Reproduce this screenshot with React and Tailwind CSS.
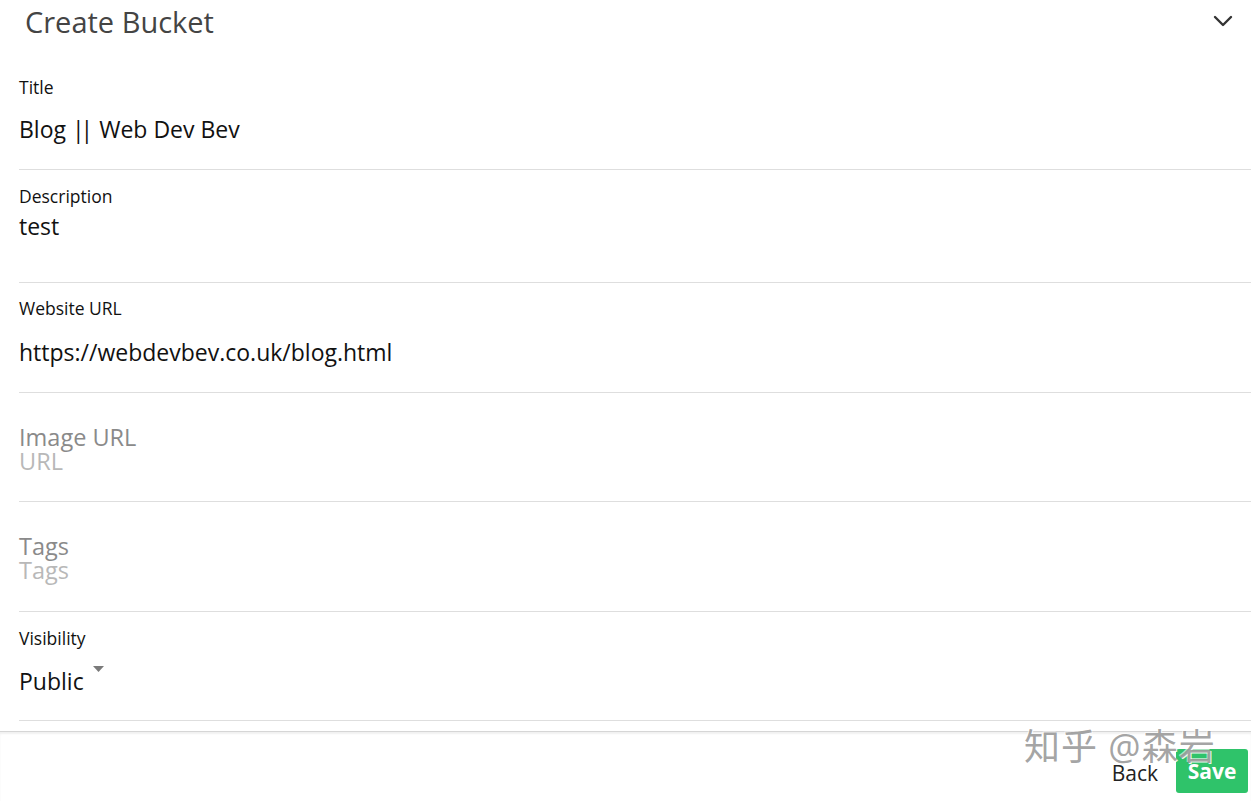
import React from "react";

const font = "font-['Open_Sans','Noto_Sans_CJK_SC',sans-serif]";

const Field = ({ label, value, className, gapClass }) => (
  <div className={`border-b border-[#dedede] ${className}`}>
    <div className="text-[17.5px] leading-[20px] text-[#111]">{label}</div>
    <div className={`text-[23px] leading-[30px] text-[#111] ${gapClass}`}>{value}</div>
  </div>
);

const Placeholder = ({ label, hint, className }) => (
  <div className={`border-b border-[#dedede] ${className}`}>
    <div className="text-[23.5px] leading-[24px] text-[#8a8a8a]">{label}</div>
    <div className="text-[23.5px] leading-[24px] text-[#b8b8b8]">{hint}</div>
  </div>
);

export default function App() {
  return (
    <div className={`relative w-[1251px] h-[801px] overflow-hidden bg-white ${font}`}>
      <div className="flex h-[60px] items-start justify-between pl-[25px] pr-[18px]">
        <h1 className="pt-[4px] text-[29px] leading-[36px] text-[#444]">Create Bucket</h1>
        <svg className="mt-[15px]" width="20" height="12" viewBox="0 0 20 12">
          <path d="M2 2 L10 10 L18 2" fill="none" stroke="#333" strokeWidth="2.4" strokeLinecap="round" strokeLinejoin="round" />
        </svg>
      </div>

      <div className="pl-[19px]">
        <Field
          label="Title"
          value={
            <>
              Blog <span className="tracking-[-4px]">|</span>| Web Dev Bev
            </>
          }
          className="h-[110px] pt-[17px]"
          gapClass="mt-[17px]"
        />
        <Field label="Description" value="test" className="h-[113px] pt-[16px]" gapClass="mt-[5px]" />
        <Field label="Website URL" value="https://webdevbev.co.uk/blog.html" className="h-[110px] pt-[15px]" gapClass="mt-[19px]" />
        <Placeholder label="Image URL" hint="URL" className="h-[109px] pt-[32px]" />
        <Placeholder label="Tags" hint="Tags" className="h-[110px] pt-[32px]" />
        <div className="h-[109px] border-b border-[#dedede] pt-[16px]">
          <div className="text-[17.5px] leading-[20px] text-[#111]">Visibility</div>
          <div className="mt-[18px] flex items-start gap-[9px]">
            <span className="text-[23px] leading-[30px] text-[#111]">Public</span>
            <svg width="11" height="6" viewBox="0 0 11 6">
              <path d="M0 0 L11 0 L5.5 6 Z" fill="#7a7a7a" />
            </svg>
          </div>
        </div>
      </div>

      <div className="mt-[10px] flex h-[70px] items-start justify-end border-t border-[#d6d6d6] pr-[3px] shadow-[inset_0_2px_2px_rgba(0,0,0,0.06)]">
        <button className="mt-[28px] mr-[18px] text-[21px] leading-[26px] text-[#222]">Back</button>
        <button className="mt-[17px] h-[44px] w-[72px] rounded-[3px] bg-[#2fc36a] text-[21px] font-bold leading-[26px] text-white">
          Save
        </button>
      </div>

      <span className="pointer-events-none absolute left-[1024px] top-[726px] text-[36px] leading-[42px] tracking-[1px] text-[#8c8c8c]/80 [text-shadow:1px_1px_0_rgba(255,255,255,0.9),-1px_-1px_0_rgba(255,255,255,0.6)]">
        知乎 @森岩
      </span>
    </div>
  );
}
